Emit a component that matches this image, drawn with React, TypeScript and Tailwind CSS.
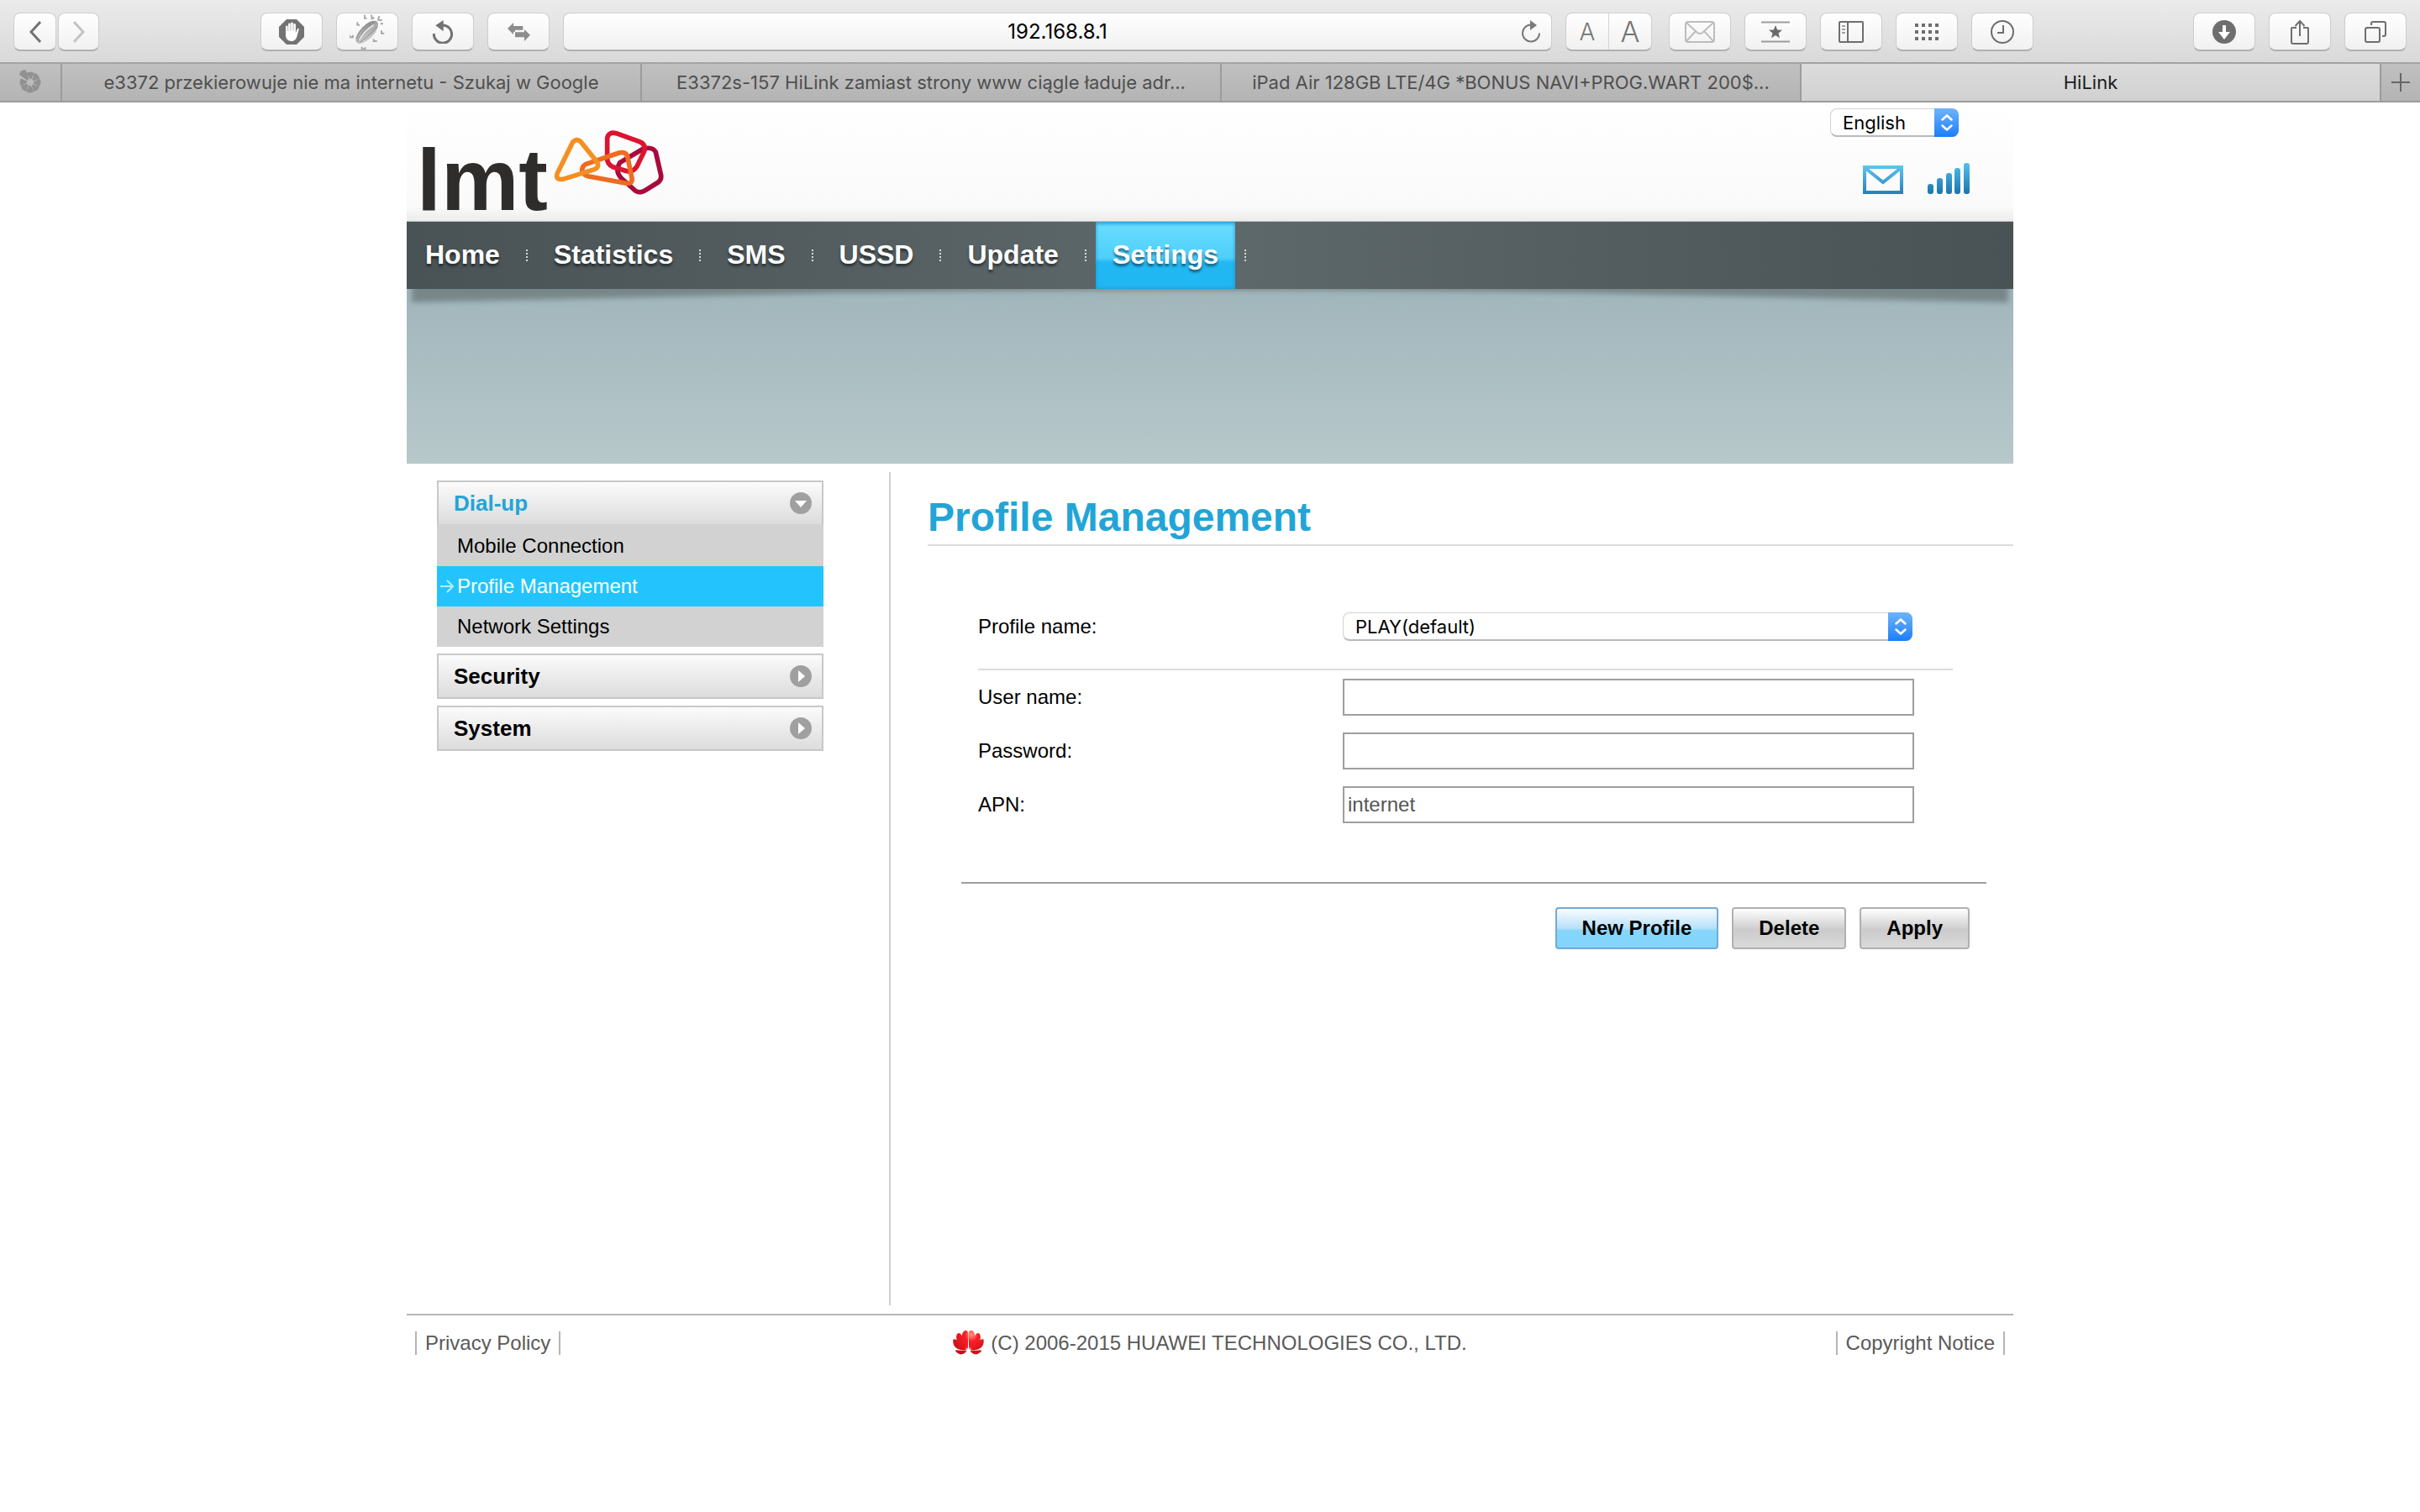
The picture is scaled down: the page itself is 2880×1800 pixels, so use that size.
import React, { useState } from 'react'

interface TabItem {
  title: string
  active?: boolean
}

const tabs: TabItem[] = [
  { title: 'e3372 przekierowuje nie ma internetu - Szukaj w Google' },
  { title: 'E3372s-157 HiLink zamiast strony www ciągle ładuje adr...' },
  { title: 'iPad Air 128GB LTE/4G *BONUS NAVI+PROG.WART 200$...' },
  { title: 'HiLink', active: true },
]

const navItems = ['Home', 'Statistics', 'SMS', 'USSD', 'Update', 'Settings']

const dialUpItems = ['Mobile Connection', 'Profile Management', 'Network Settings']

const StopIcon = () => (
  <svg width="30" height="30" viewBox="0 0 30 30">
    <path d="M9 0h12l9 9v12l-9 9H9l-9-9V9z" fill="#737373" />
    <path
      d="M8 15V8.500a1.400 1.400 0 0 1 2.600 0V14h.5V5.500a1.400 1.400 0 0 1 2.600 0V13.500h.5V4.500a1.400 1.400 0 0 1 2.600 0V13.500h.5V6a1.400 1.400 0 0 1 2.600 0v10l2-4.500c.8-1.300 2.200-.6 1.800.8L21.500 20c-1 3.500-3 6-6.500 6-4.500 0-7-3-7-7z"
      fill="#fff"
    />
  </svg>
)

const BugIcon = () => (
  <svg width="42" height="42" viewBox="0 0 126 126">
    <defs>
      <linearGradient id="bug" x1="0" y1="1" x2="1" y2="0">
        <stop offset="0" stopColor="#d8d8d8" />
        <stop offset="0.7" stopColor="#a6a6a6" />
        <stop offset="1" stopColor="#707070" />
      </linearGradient>
    </defs>
    <ellipse cx="62" cy="64" rx="52" ry="24" transform="rotate(-46 62 64)" fill="url(#bug)" />
    <path d="M28 98Q40 62 84 32M34 102Q64 84 98 44M24 88Q32 58 74 34" fill="none" stroke="#8a8a8a" strokeWidth="3" />
    <path d="M34 92Q50 62 86 38" fill="none" stroke="#eee" strokeWidth="4" />
    <path
      d="M54 2v12h8M78 2l2 14 8-4M106 6l-4 14 14 2M28 28v10h8M0 74v8h12v-8M114 58v10h10M86 88v8h12M44 116v8h12v-6M110 34h10"
      fill="none"
      stroke="#a9a9a9"
      strokeWidth="6"
    />
  </svg>
)

const UndoIcon = () => (
  <svg width="24" height="28" viewBox="0 0 72 84">
    <path d="M4 48A32 32 0 1 0 36 18" fill="none" stroke="#737373" strokeWidth="9" />
    <path d="M10 19L38 0v40z" fill="#737373" />
  </svg>
)

const SwapIcon = () => (
  <svg width="27" height="22" viewBox="0 0 81 66" fill="#8c8c8c">
    <path d="M0 21L21 0v12h34v14H27v6h-6v10z" />
    <path d="M81 44L60 24v10H27v18h33v14z" />
  </svg>
)

const ReloadIcon = () => (
  <svg width="24" height="28" viewBox="0 0 24 28">
    <path d="M12 5.500a10 10 0 1 0 10 10" fill="none" stroke="#7a7a7a" strokeWidth="2" />
    <path d="M11 0l8 6-8 6z" fill="#7a7a7a" />
  </svg>
)

const MailIcon = () => (
  <svg width="36" height="26" viewBox="0 0 36 26" fill="none" stroke="#bdbdbd" strokeWidth="2">
    <rect x="1" y="1" width="34" height="24" rx="3" />
    <path d="M2 2l13 12q3 2 6 0L34 2M2 24l11-12M34 24L23 12" />
  </svg>
)

const TopSitesIcon = () => (
  <svg width="34" height="26" viewBox="0 0 34 26">
    <path d="M0 1.500h34M0 24.500h34" stroke="#9c9c9c" strokeWidth="2" />
    <path d="M17 5l2.200 5.500 5.800.3-4.500 3.700 1.500 5.700-5-3.200-5 3.200 1.500-5.700L9 10.800l5.800-.3z" fill="#6b6b6b" />
  </svg>
)

const SidebarIcon = () => (
  <svg width="30" height="26" viewBox="0 0 30 26" fill="none" stroke="#6e6e6e" strokeWidth="2">
    <rect x="1" y="1" width="28" height="24" rx="1" />
    <path d="M11 1v24" />
    <path d="M4 6h4M4 10h4M4 14h4" stroke="#a0a0a0" />
  </svg>
)

const GridIcon = () => (
  <svg width="28" height="20" viewBox="0 0 28 20" fill="#6e6e6e">
    {[0, 8, 16].map((y) => [0, 8, 16, 24].map((x) => <rect key={`${x}-${y}`} x={x} y={y} width="4" height="4" />))}
  </svg>
)

const ClockIcon = () => (
  <svg width="28" height="28" viewBox="0 0 28 28" fill="none" stroke="#6e6e6e" strokeWidth="2">
    <circle cx="14" cy="14" r="13" />
    <path d="M15 6v9H8" />
  </svg>
)

const DownloadIcon = () => (
  <svg width="28" height="28" viewBox="0 0 28 28">
    <circle cx="14" cy="14" r="14" fill="#6e6e6e" />
    <path d="M12 6h4v8h5l-7 9-7-9h5z" fill="#fff" />
  </svg>
)

const ShareIcon = () => (
  <svg width="24" height="30" viewBox="0 0 24 30" fill="none" stroke="#6e6e6e" strokeWidth="2">
    <path d="M8 10H3q-1 0-1 1v16q0 2 2 2h16q2 0 2-2V11q0-1-1-1h-5M12 20V2M6.500 8L12 2l5.500 6" />
  </svg>
)

const TabsIcon = () => (
  <svg width="26" height="26" viewBox="0 0 26 26" fill="none" stroke="#6e6e6e" strokeWidth="2">
    <rect x="1" y="8" width="17" height="17" rx="2" />
    <path d="M8 5V3q0-2 2-2h13q2 0 2 2v13q0 2-2 2h-2" />
  </svg>
)

// Gray wedges around a small star-shaped gap
const ApertureIcon = () => (
  <svg width="30" height="30" viewBox="0 0 30 30" fill="#919191">
    {[0, 45, 90, 135, 180, 225, 270].map((angle) => (
      <path key={angle} d="M14.500 11L10.500 4q4.500-3 9 0l-3 7z" transform={`rotate(${angle} 15 15)`} />
    ))}
    <path d="M12 13L2 6q1-6 7-6 3 4 4 11z" />
  </svg>
)

// Four interlocking rounded shapes next to the operator name
const LmtShapes = () => (
  <svg className="mb-[29px] ml-1" width="137" height="82" viewBox="530 65 411 246" fill="none" strokeWidth="17" strokeLinejoin="round">
    <path d="M775 190L855 142Q890 130 903 152L922 235Q924 250 912 260L862 291Q845 300 830 290L780 245Q762 225 768 205Z" stroke="#a90a3c" />
    <path d="M730 102Q735 78 762 85L845 115Q870 125 862 150L835 205Q822 224 800 220L750 205Q730 195 730 175Z" stroke="#db1430" />
    <path d="M652 196L772 155Q798 148 803 172L818 245Q822 268 795 263L660 238Q634 228 642 208Q645 200 652 196Z" stroke="#ee6b21" />
    <path d="M606 118Q621 100 638 118L694 188Q703 206 684 214L572 249Q543 253 552 228Z" stroke="#f58f22" />
  </svg>
)

const EnvelopeIcon = () => (
  <svg width="48" height="34" viewBox="0 0 48 34" fill="none" stroke="url(#env)" strokeWidth="4">
    <defs>
      <linearGradient id="env" gradientUnits="userSpaceOnUse" x1="0" y1="0" x2="0" y2="34">
        <stop offset="0" stopColor="#5cc5f3" />
        <stop offset="1" stopColor="#2581b7" />
      </linearGradient>
    </defs>
    <rect x="2" y="2" width="44" height="30" />
    <path d="M4 4l20 16L44 4" />
  </svg>
)

const SignalIcon = () => (
  <svg width="52" height="37" viewBox="0 0 52 37" fill="url(#sig)">
    <defs>
      <linearGradient id="sig" gradientUnits="userSpaceOnUse" x1="0" y1="0" x2="0" y2="37">
        <stop offset="0" stopColor="#52c0ef" />
        <stop offset="1" stopColor="#1c74aa" />
      </linearGradient>
    </defs>
    <rect x="1" y="25" width="7" height="12" rx="3" />
    <rect x="12" y="18" width="7" height="19" rx="3" />
    <rect x="23" y="12" width="7" height="25" rx="3" />
    <rect x="33" y="6" width="7" height="31" rx="3" />
    <rect x="44" y="0" width="7" height="37" rx="3" />
  </svg>
)

const HuaweiLogo = () => (
  <svg width="37" height="29" viewBox="0 0 37 29" fill="url(#hw)">
    <defs>
      <radialGradient id="hw" gradientUnits="userSpaceOnUse" cx="22" cy="5" r="26">
        <stop offset="0" stopColor="#ff9a80" />
        <stop offset="0.3" stopColor="#fb1f26" />
        <stop offset="1" stopColor="#c40d16" />
      </radialGradient>
    </defs>
    <path d="M17.800 22C10 12 9 4 13.500 0.500 17.500-1 18.500 2 18.300 7zM19.200 22C27 12 28 4 23.500 0.500 19.500-1 18.500 2 18.700 7z" />
    <path d="M17 22.500C6 16 1.500 9 5.500 3.500 9 1.500 11.500 5 17 22.500zM20 22.500C31 16 35.500 9 31.500 3.500 28 1.500 25.500 5 20 22.500z" />
    <path d="M16.500 23.500C5 24 -1 19 0.500 10.500 4 9.500 9 13 16.500 23.500zM20.500 23.500C32 24 38 19 36.500 10.500 33 9.500 28 13 20.500 23.500z" />
    <path d="M16.500 24.200C13 28.500 9 30.500 3.500 25 3 24 3 23.500 3.500 23.200zM20.500 24.200C24 28.500 28 30.500 33.500 25 34 24 34 23.500 33.500 23.200z" />
  </svg>
)

interface ToolButtonProps {
  label: string
  size?: string
  children: React.ReactNode
}

const ToolButton = ({ label, size = 'w-[74px]', children }: ToolButtonProps) => (
  <button
    aria-label={label}
    className={`flex h-[46px] items-center justify-center rounded-lg border border-b-2 border-[#cdcdcd] border-b-[#b0b0b0] bg-linear-to-b from-white to-[#f1f1f1] ${size}`}
  >
    {children}
  </button>
)

const BrowserChrome = () => (
  <header className="font-[Inter,sans-serif]">
    <div className="flex h-[76px] items-start gap-4 border-b-2 border-[#a3a3a3] bg-linear-to-b from-[#ebebeb] to-[#d9d9d9] px-4 pt-[15px]">
      <div className="mr-44 flex gap-[2px]">
        <ToolButton label="Back" size="w-[51px]">
          <svg width="14" height="26" viewBox="0 0 14 26" fill="none" stroke="#737373" strokeWidth="3">
            <path d="M13 1L2 13l11 12" />
          </svg>
        </ToolButton>
        <ToolButton label="Forward" size="w-[49px]">
          <svg width="14" height="26" viewBox="0 0 14 26" fill="none" stroke="#c4c4c4" strokeWidth="3">
            <path d="M1 1l11 12L1 25" />
          </svg>
        </ToolButton>
      </div>
      <ToolButton label="Block content">
        <StopIcon />
      </ToolButton>
      <ToolButton label="Debug">
        <BugIcon />
      </ToolButton>
      <ToolButton label="Undo">
        <UndoIcon />
      </ToolButton>
      <ToolButton label="Switch">
        <SwapIcon />
      </ToolButton>
      <div className="flex h-[46px] flex-1 items-center rounded-lg border border-b-2 border-[#cdcdcd] border-b-[#b0b0b0] bg-linear-to-b from-white to-[#f1f1f1] pr-3 pl-9">
        <input
          aria-label="Address"
          defaultValue="192.168.8.1"
          className="min-w-0 flex-1 bg-transparent text-center text-2xl text-black outline-none"
        />
        <button aria-label="Reload">
          <ReloadIcon />
        </button>
      </div>
      <div className="mr-1 flex h-[46px] w-[103px] rounded-lg border border-b-2 border-[#cdcdcd] border-b-[#b0b0b0] bg-linear-to-b from-white to-[#f1f1f1] text-[#757575]">
        <button aria-label="Smaller text" className="flex-1 border-r border-[#d4d4d4] text-[28px] leading-10 font-light">
          A
        </button>
        <button aria-label="Larger text" className="flex-1 text-[34px] leading-10 font-light">
          A
        </button>
      </div>
      <ToolButton label="Mail">
        <MailIcon />
      </ToolButton>
      <ToolButton label="Top sites">
        <TopSitesIcon />
      </ToolButton>
      <ToolButton label="Sidebar">
        <SidebarIcon />
      </ToolButton>
      <ToolButton label="Favorites">
        <GridIcon />
      </ToolButton>
      <ToolButton label="History">
        <ClockIcon />
      </ToolButton>
      <div className="ml-[174px] flex gap-4">
        <ToolButton label="Downloads">
          <DownloadIcon />
        </ToolButton>
        <ToolButton label="Share">
          <ShareIcon />
        </ToolButton>
        <ToolButton label="All tabs">
          <TabsIcon />
        </ToolButton>
      </div>
    </div>

    <div className="flex h-[46px] border-b-2 border-[#9c9c9c] bg-linear-to-b from-[#c0c0c0] to-[#b4b4b4]">
      <button aria-label="Pinned tab" className="flex w-[74px] items-center justify-center border-r-2 border-[#9c9c9c]">
        <ApertureIcon />
      </button>
      {tabs.map((tab) => (
        <button
          key={tab.title}
          className={`min-w-0 flex-1 truncate border-r-2 border-[#9c9c9c] text-[22px] ${
            tab.active ? 'bg-linear-to-b from-[#dcdcdc] to-[#d1d1d1] text-[#1c1c1c]' : 'text-[#4f4f4f]'
          }`}
        >
          {tab.title}
        </button>
      ))}
      <button aria-label="New tab" className="flex w-[46px] items-center justify-center">
        <svg width="22" height="22" viewBox="0 0 22 22" stroke="#666" strokeWidth="2">
          <path d="M11 0v22M0 11h22" />
        </svg>
      </button>
    </div>
  </header>
)

interface PopupSelectProps {
  id: string
  label?: string
  options: string[]
  className?: string
}

const PopupSelect = ({ id, label, options, className = '' }: PopupSelectProps) => (
  <div className={`relative h-[34px] ${className}`}>
    <select
      id={id}
      aria-label={label}
      className="h-full w-full appearance-none rounded-lg border border-b-2 border-[#d2d2d2] border-b-[#b9b9b9] bg-white pl-[14px] font-[Inter,sans-serif] text-[22px] leading-7 text-black"
    >
      {options.map((option) => (
        <option key={option}>{option}</option>
      ))}
    </select>
    <span className="pointer-events-none absolute inset-y-0 right-0 flex w-[29px] items-center justify-center rounded-r-lg bg-linear-to-b from-[#6db3fa] to-[#157efb]">
      <svg width="14" height="20" viewBox="0 0 14 20" fill="none" stroke="#fff" strokeWidth="2.500" strokeLinecap="round" strokeLinejoin="round">
        <path d="M1.500 6.500L7 1.500l5.500 5M1.500 13.500l5.500 5 5.500-5" />
      </svg>
    </span>
  </div>
)

const MenuHeading = ({ title, open }: { title: string; open?: boolean }) => (
  <button
    aria-expanded={!!open}
    className={`flex h-[54px] w-full items-center justify-between border-2 border-[#c8c8c8] bg-linear-to-b from-[#fbfbfb] to-[#dcdcdc] pr-3 pl-[18px] text-[26px] font-bold ${
      open ? 'border-b-[#d3d3d3] text-[#22a5d6]' : 'text-black'
    }`}
  >
    {title}
    <svg width="26" height="26" viewBox="0 0 26 26">
      <circle cx="13" cy="13" r="13" fill="#a0a0a0" />
      <path d={open ? 'M6 10h14l-7 8z' : 'M10 6v14l8-7z'} fill="#fff" />
    </svg>
  </button>
)

const Sidebar = () => {
  const [current, setCurrent] = useState('Profile Management')

  return (
    <aside className="w-[576px] shrink-0 border-r-2 border-[#cfcfcf] pt-[10px] pr-[78px] pl-9">
      <MenuHeading title="Dial-up" open />
      <ul className="mb-2 bg-[#d2d2d2]">
        {dialUpItems.map((item) => (
          <li key={item}>
            <a
              href="#"
              onClick={() => setCurrent(item)}
              className={`flex h-12 items-center text-2xl ${item === current ? 'bg-[#23c4fe] text-white' : 'text-black'}`}
            >
              <span className="flex w-6 justify-center">
                {item === current && (
                  <svg width="16" height="16" viewBox="0 0 16 16" fill="none" stroke="#b9ecff" strokeWidth="2">
                    <path d="M0 8h15M8 1l7 7-7 7" />
                  </svg>
                )}
              </span>
              {item}
            </a>
          </li>
        ))}
      </ul>
      <div className="flex flex-col gap-2">
        <MenuHeading title="Security" />
        <MenuHeading title="System" />
      </div>
    </aside>
  )
}

const TextField = ({ id, label, type = 'text', value = '' }: { id: string; label: string; type?: string; value?: string }) => (
  <div className="flex items-center">
    <label htmlFor={id} className="w-[434px]">
      {label}
    </label>
    <input
      id={id}
      type={type}
      defaultValue={value}
      className="h-11 min-w-0 flex-1 border-2 border-[#9e9e9e] bg-white px-1 text-[#555]"
    />
  </div>
)

const grayButton =
  'h-[50px] rounded border-2 border-[#b0b0b0] bg-linear-to-b from-white via-[#cbcbcb] via-55% to-[#dadada] px-[30px] font-bold text-black'

const ProfileForm = () => (
  <section className="ml-11 min-w-0 flex-1 text-2xl text-black">
    <h1 className="border-b-2 border-[#dcdcdc] pt-[26px] pb-1 text-5xl leading-14 font-bold text-[#22a5d6]">Profile Management</h1>

    <form onSubmit={(e) => e.preventDefault()}>
      <div className="pt-[79px] pr-[72px] pl-[60px]">
        <div className="flex items-center border-b-2 border-[#dcdcdc] pr-12 pb-[33px]">
          <label htmlFor="profile" className="w-[434px]">
            Profile name:
          </label>
          <PopupSelect id="profile" options={['PLAY(default)']} className="flex-1" />
        </div>
        <div className="flex flex-col gap-5 pt-[10px] pr-[46px]">
          <TextField id="user" label="User name:" />
          <TextField id="password" label="Password:" type="password" />
          <TextField id="apn" label="APN:" value="internet" />
        </div>
      </div>

      <div className="mt-[70px] mr-8 ml-10 flex justify-end gap-4 border-t-2 border-[#9e9e9e] pt-7 pr-5">
        <button className="h-[50px] rounded border-2 border-[#72a9d8] bg-[linear-gradient(#fafdff,#b8e0f8_50%,#86d6fa_56%,#82d5fc)] px-[30px] font-bold text-black">
          New Profile
        </button>
        <button className={grayButton}>Delete</button>
        <button className={grayButton}>Apply</button>
      </div>
    </form>
  </section>
)

const NavBar = () => (
  <nav className="flex h-20 bg-linear-to-r from-[#495254] via-[#5e696b] to-[#495254] pl-[2px]">
    {navItems.map((item) => (
      <React.Fragment key={item}>
        <a
          href="#"
          className={`flex items-center px-5 pb-[2px] text-[32px] font-bold text-white text-shadow-[0_3px_3px_rgb(0_0_0/0.5)] ${
            item === 'Settings'
              ? 'bg-[linear-gradient(#3fb8e6,#66dbfd_8%,#4fcffb_54%,#22b8f2_60%,#20b7f3)] shadow-[inset_0_0_4px_#1a8fc8]'
              : ''
          }`}
        >
          {item}
        </a>
        <span className="mx-[11px] h-[14px] self-center border-l-2 border-dotted border-[#d5d9da]" />
      </React.Fragment>
    ))}
  </nav>
)

const App = () => (
  <div className="min-h-screen bg-white font-['Liberation_Sans',Arial,sans-serif]">
    <BrowserChrome />

    <div className="mx-auto max-w-[1912px]">
      <div className="flex h-[142px] items-end justify-between border-b border-[#bfc3c3] bg-[linear-gradient(#fff,#fafafa_88%,#ececec)]">
        <a href="#" aria-label="LMT home" className="flex items-end pl-3">
          <span className="text-[104px] leading-[98px] font-bold text-[#2f2d2b]">lmt</span>
          <LmtShapes />
        </a>
        <div className="flex flex-col items-end gap-[31px] self-start pt-[7px] pr-[51px]">
          <PopupSelect id="language" label="Language" options={['English']} className="mr-[14px] w-[153px]" />
          <div className="flex items-end gap-7">
            <EnvelopeIcon />
            <SignalIcon />
          </div>
        </div>
      </div>

      <NavBar />
      <div className="relative h-52 overflow-hidden bg-linear-to-b from-[#a1b6bc] to-[#b7c8ca]">
        {/* curled shadow under the nav, deeper at both ends */}
        <svg className="absolute inset-x-0 top-0 h-6 w-full" viewBox="0 0 1912 24" preserveAspectRatio="none">
          <defs>
            <filter id="soft" x="-5%" y="-50%" width="110%" height="200%">
              <feGaussianBlur stdDeviation="3" />
            </filter>
          </defs>
          <path d="M6 -10V16L500 5Q956 -2 1412 5L1906 16V-10Z" fill="#5b6768" opacity="0.6" filter="url(#soft)" />
        </svg>
      </div>

      <main className="flex min-h-[1002px] pt-[10px]">
        <Sidebar />
        <ProfileForm />
      </main>

      <footer className="mt-[10px] grid grid-cols-[1fr_auto_1fr] items-center border-t-2 border-[#b5b5b5] px-[10px] pt-[18px] text-2xl leading-7 text-[#5a5a5a]">
        <a href="#" className="justify-self-start border-x-2 border-[#b5b5b5] px-[10px]">
          Privacy Policy
        </a>
        <p className="flex items-center gap-2">
          <HuaweiLogo />
          (C) 2006-2015 HUAWEI TECHNOLOGIES CO., LTD.
        </p>
        <a href="#" className="justify-self-end border-x-2 border-[#b5b5b5] px-[10px]">
          Copyright Notice
        </a>
      </footer>
    </div>
  </div>
)

export default App
